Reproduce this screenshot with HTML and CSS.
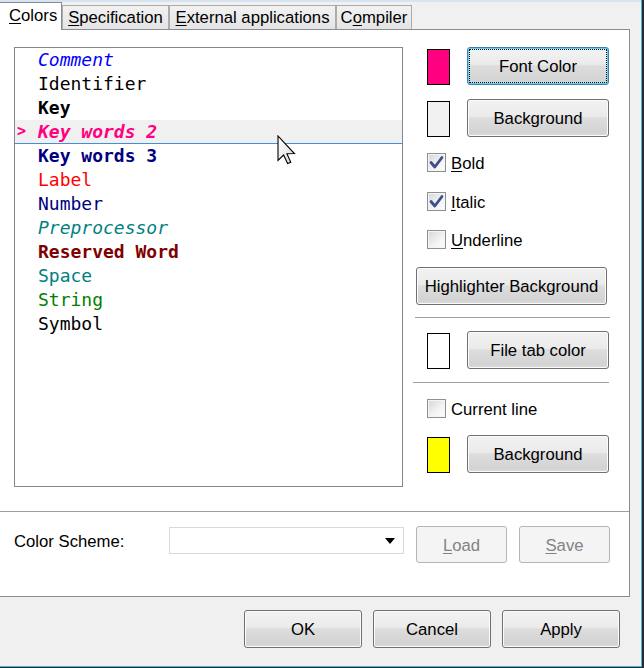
FILE: index.html
```html
<!DOCTYPE html>
<html>
<head>
<meta charset="utf-8">
<title>Colors</title>
<link rel="stylesheet" href="styles.css">
</head>
<body>
<div class="dialog">
  <div class="strip"></div>
  <div class="tabs">
    <div class="tab active"><u>C</u>olors</div>
    <div class="tab spec"><u>S</u>pecification</div>
    <div class="tab ext"><u>E</u>xternal applications</div>
    <div class="tab comp">C<u>o</u>mpiler</div>
  </div>
  <div class="page">
    <div class="top">
      <div class="listbox">
        <div class="item c-comment">Comment</div>
        <div class="item c-ident">Identifier</div>
        <div class="item c-key">Key</div>
        <div class="item c-kw2 selected"><span class="mark">&gt;</span>Key words 2</div>
        <div class="item c-kw3">Key words 3</div>
        <div class="item c-label">Label</div>
        <div class="item c-number">Number</div>
        <div class="item c-prep">Preprocessor</div>
        <div class="item c-res">Reserved Word</div>
        <div class="item c-space">Space</div>
        <div class="item c-string">String</div>
        <div class="item c-symbol">Symbol</div>
      </div>
      <div class="side">
        <div class="row r1">
          <div class="swatch pink"></div>
          <div class="btn wide default">Font Color</div>
        </div>
        <div class="row r2">
          <div class="swatch grey"></div>
          <div class="btn wide">Background</div>
        </div>
        <div class="check ck-bold">
          <span class="box"><svg viewBox="0 0 19 19" width="19" height="19"><path d="M4 9.5 L7.8 14 L15 4.5" fill="none" stroke="#3b4f8e" stroke-width="2.8" stroke-linecap="round" stroke-linejoin="round"/></svg></span>
          <span class="lbl"><u>B</u>old</span>
        </div>
        <div class="check ck-italic">
          <span class="box"><svg viewBox="0 0 19 19" width="19" height="19"><path d="M4 9.5 L7.8 14 L15 4.5" fill="none" stroke="#3b4f8e" stroke-width="2.8" stroke-linecap="round" stroke-linejoin="round"/></svg></span>
          <span class="lbl"><u>I</u>talic</span>
        </div>
        <div class="check ck-under">
          <span class="box"></span>
          <span class="lbl"><u>U</u>nderline</span>
        </div>
        <div class="btn hl">Highlighter Background</div>
        <div class="sep s1"></div>
        <div class="row r3">
          <div class="swatch white"></div>
          <div class="btn wide">File tab color</div>
        </div>
        <div class="sep s2"></div>
        <div class="check ck-cur">
          <span class="box"></span>
          <span class="lbl">Current line</span>
        </div>
        <div class="row r4">
          <div class="swatch yellow"></div>
          <div class="btn wide">Background</div>
        </div>
      </div>
    </div>
    <div class="hsep"></div>
    <div class="scheme">
      <div class="scheme-label">Color Scheme:</div>
      <div class="combo"><span class="arrow"></span></div>
      <div class="btn disabled load"><u>L</u>oad</div>
      <div class="btn disabled save"><u>S</u>ave</div>
    </div>
  </div>
  <div class="footer">
    <div class="btn big">OK</div>
    <div class="btn big">Cancel</div>
    <div class="btn big">Apply</div>
  </div>
  <svg class="cursor" width="20" height="30" viewBox="0 0 20 30">
    <defs>
      <linearGradient id="cg" x1="0" y1="0" x2="1" y2="1">
        <stop offset="0" stop-color="#ffffff"/>
        <stop offset="1" stop-color="#d8d8d8"/>
      </linearGradient>
    </defs>
    <path d="M1 1 L1 25.5 L6.6 20 L10.6 28.6 L13.8 27.2 L9.9 18.8 L17.4 18.6 Z" fill="url(#cg)" stroke="#000" stroke-width="1.1" stroke-linejoin="miter"/>
  </svg>
</div>
</body>
</html>
```

FILE: styles.css
```css
html, body {
  margin: 0;
  padding: 0;
}
body {
  background: #2a2a2a;
  width: 644px;
  height: 668px;
  overflow: hidden;
  font-family: "Liberation Sans", Arial, sans-serif;
  font-size: 16.7px;
  color: #000;
}
u {
  text-decoration-thickness: 1px;
  text-underline-offset: 2px;
}
.dialog {
  position: relative;
  width: 641px;
  height: 666px;
  background: #f0f0f0;
  border-right: 1px solid #3fb3e2;
  border-bottom: 1px solid #3fb3e2;
}
.strip {
  height: 2px;
  background: #d5e4f3;
}

/* tabs */
.tabs {
  display: flex;
  align-items: flex-end;
  height: 27px;
  position: relative;
  z-index: 2;
}
.tab {
  box-sizing: border-box;
  height: 24px;
  line-height: 24px;
  border: 1px solid #acacac;
  border-bottom: none;
  background: linear-gradient(#f2f2f2, #e4e4e4);
  text-align: center;
  white-space: nowrap;
}
.tab.active {
  width: 62px;
  height: 28px;
  margin-bottom: -1px;
  line-height: 26px;
  border: 1px solid #898c95;
  border-left: none;
  border-bottom: none;
  background: #fff;
  text-align: left;
  padding-left: 9px;
}
.tab.spec { width: 107px; }
.tab.ext { width: 167px; }
.tab.comp { width: 76px; }

/* page */
.page {
  box-sizing: border-box;
  width: 630px;
  height: 568px;
  background: #fff;
  border-top: 1px solid #898c95;
  border-right: 1px solid #898c95;
  border-bottom: 1px solid #898c95;
}
.top {
  display: flex;
  align-items: flex-start;
  padding: 17px 0 0 14px;
}
.listbox {
  box-sizing: border-box;
  width: 389px;
  height: 440px;
  border: 1px solid #828790;
  background: #fff;
  font-family: "DejaVu Sans Mono", "Liberation Mono", monospace;
  font-size: 18px;
}
.item {
  box-sizing: border-box;
  height: 24px;
  line-height: 24px;
  padding-left: 23px;
  white-space: nowrap;
}
.item.selected {
  padding-left: 0;
  background: #f0f0f0;
  border-bottom: 1px solid #3f8fdf;
  line-height: 23px;
}
.mark {
  display: inline-block;
  box-sizing: border-box;
  width: 23px;
  padding-left: 2px;
  font-size: 15px;
  font-weight: bold;
  font-style: normal;
  vertical-align: top;
}
.c-comment { color: #0000ff; font-style: italic; }
.c-ident { color: #000; }
.c-key { color: #000; font-weight: bold; }
.c-kw2 { color: #ff0080; font-style: italic; font-weight: bold; }
.c-kw3 { color: #000080; font-weight: bold; }
.c-label { color: #ff0000; }
.c-number { color: #000080; }
.c-prep { color: #008080; font-style: italic; }
.c-res { color: #800000; font-weight: bold; }
.c-space { color: #008080; }
.c-string { color: #008000; }
.c-symbol { color: #000; }

/* side column */
.side {
  margin-left: 10px;
  width: 197px;
  display: flex;
  flex-direction: column;
}
.row {
  display: flex;
  align-items: flex-start;
}
.r2 { margin-top: 14px; }
.r3 { margin-top: 13px; }
.r4 { margin-top: 17px; }
.swatch {
  box-sizing: border-box;
  width: 23px;
  height: 36px;
  margin: 2px 0 0 14px;
  border: 1px solid #000;
}
.swatch.pink { background: #ff0080; }
.swatch.grey { background: #f0f0f0; }
.swatch.white { background: #fff; }
.swatch.yellow { background: #ffff00; }

.btn {
  box-sizing: border-box;
  position: relative;
  display: flex;
  align-items: center;
  justify-content: center;
  height: 38px;
  padding-top: 2px;
  border: 1px solid #707070;
  border-radius: 3px;
  background: linear-gradient(#f2f2f2 0%, #ebebeb 45%, #dddddd 50%, #d3d3d3 90%, #dadada 100%);
  box-shadow: inset 0 0 0 1px #fbfbfb;
  white-space: nowrap;
  color: #000;
}
.btn.wide {
  width: 142px;
  margin-left: 17px;
}
.btn.default {
  border-color: #3c7fb1;
  box-shadow: inset 0 0 0 1px #5fd2f7;
}
.btn.default::after {
  content: "";
  position: absolute;
  inset: 1px;
  border: 1px dotted #000;
  border-radius: 1px;
}
.btn.hl {
  width: 191px;
  margin: 18px 0 0 3px;
}

.check {
  display: flex;
  align-items: center;
  height: 19px;
  padding-left: 14px;
}
.ck-bold { margin-top: 16px; }
.ck-italic { margin-top: 20px; }
.ck-under { margin-top: 19px; }
.ck-cur { margin-top: 16px; }
.box {
  box-sizing: border-box;
  width: 19px;
  height: 19px;
  border: 1px solid #8e8f8f;
  background: linear-gradient(135deg, #d6d6d6, #f4f4f4 60%, #fdfdfd);
  box-shadow: inset 0 0 0 1px #f5f5f5;
  position: relative;
}
.box svg {
  display: block;
  margin: -1px;
}
.lbl {
  margin-left: 5px;
  line-height: 19px;
  padding-top: 2px;
}

.sep {
  height: 1px;
  background: #a0a0a0;
}
.s1 { width: 195px; margin: 12px 0 0 2px; }
.s2 { width: 196px; margin-top: 13px; }

.hsep {
  width: 629px;
  height: 1px;
  margin-top: 24px;
  background: #a0a0a0;
}

.scheme {
  display: flex;
  align-items: flex-start;
  margin-top: 14px;
  padding-left: 14px;
  height: 37px;
}
.scheme-label {
  width: 155px;
  margin-top: 2px;
  line-height: 27px;
}
.combo {
  box-sizing: border-box;
  width: 235px;
  height: 27px;
  margin-top: 1px;
  border: 1px solid #d9d9d9;
  background: #fff;
  display: flex;
  align-items: center;
  justify-content: flex-end;
  padding-right: 8px;
}
.arrow {
  width: 0;
  height: 0;
  border-left: 5px solid transparent;
  border-right: 5px solid transparent;
  border-top: 6px solid #000;
}
.btn.disabled {
  width: 91px;
  height: 37px;
  border-color: #b5b5b5;
  background: #f4f4f4;
  box-shadow: none;
  color: #838383;
}
.load { margin-left: 12px; }
.save { margin-left: 12px; }

.footer {
  display: flex;
  justify-content: flex-end;
  gap: 11px;
  margin-top: 13px;
  padding-right: 21px;
}
.btn.big {
  width: 118px;
  height: 38px;
}

.cursor {
  position: absolute;
  left: 277px;
  top: 135px;
}
```
